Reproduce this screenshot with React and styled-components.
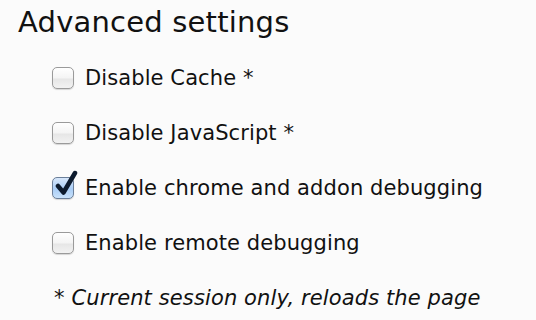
import React from "react";
import styled, { createGlobalStyle } from "styled-components";

const Global = createGlobalStyle`
  html, body { margin: 0; padding: 0; background: #fbfbfb; }
  body { font-family: "DejaVu Sans", "Liberation Sans", sans-serif; color: #111; }
`;

const Panel = styled.div`
  width: 536px;
  height: 320px;
  box-sizing: border-box;
  padding: 4px 0 0 18px;
  overflow: hidden;
`;

const Heading = styled.h1`
  margin: 0;
  font-size: 29px;
  font-weight: normal;
  line-height: 36px;
  letter-spacing: 0.2px;
`;

const List = styled.div`
  display: flex;
  flex-direction: column;
  gap: 31px;
  margin-top: 26px;
  padding-left: 34px;
`;

const Row = styled.label`
  display: flex;
  align-items: center;
  gap: 11px;
  font-size: 21px;
  line-height: 24px;
  letter-spacing: 0.1px;
`;

const Box = styled.span`
  width: 22px;
  height: 22px;
  box-sizing: border-box;
  border-radius: 5px;
  border: 1px solid ${p => (p.$checked ? "#6b7f99" : "#9a9a9a")};
  background: ${p =>
    p.$checked
      ? "linear-gradient(#d7e7fb, #a9cdf6 55%, #c9e2fb)"
      : "linear-gradient(#ffffff, #f4f4f4 50%, #e6e6e6 55%, #f2f2f2)"};
  box-shadow: 0 1px 1px rgba(0,0,0,0.15);
  position: relative;
  flex: none;
`;

const Check = styled.svg`
  position: absolute;
  left: 2px;
  top: -8px;
  width: 23px;
  height: 27px;
`;

const Note = styled.div`
  margin-top: 31px;
  padding-left: 36px;
  font-size: 21px;
  font-style: italic;
  line-height: 24px;
  letter-spacing: 0.12px;
`;

const items = [
  { label: "Disable Cache *", checked: false },
  { label: "Disable JavaScript *", checked: false },
  { label: "Enable chrome and addon debugging", checked: true },
  { label: "Enable remote debugging", checked: false },
];

export default function App() {
  return (
    <>
      <Global />
      <Panel>
        <Heading>Advanced settings</Heading>
        <List>
          {items.map(it => (
            <Row key={it.label}>
              <Box $checked={it.checked}>
                {it.checked && (
                  <Check viewBox="0 0 23 27">
                    <path d="M3 16 L8.5 22.5 L20 3" fill="none" stroke="#0d1b2e" strokeWidth="4.5" strokeLinecap="round" strokeLinejoin="round" />
                  </Check>
                )}
              </Box>
              {it.label}
            </Row>
          ))}
        </List>
        <Note>* Current session only, reloads the page</Note>
      </Panel>
    </>
  );
}
